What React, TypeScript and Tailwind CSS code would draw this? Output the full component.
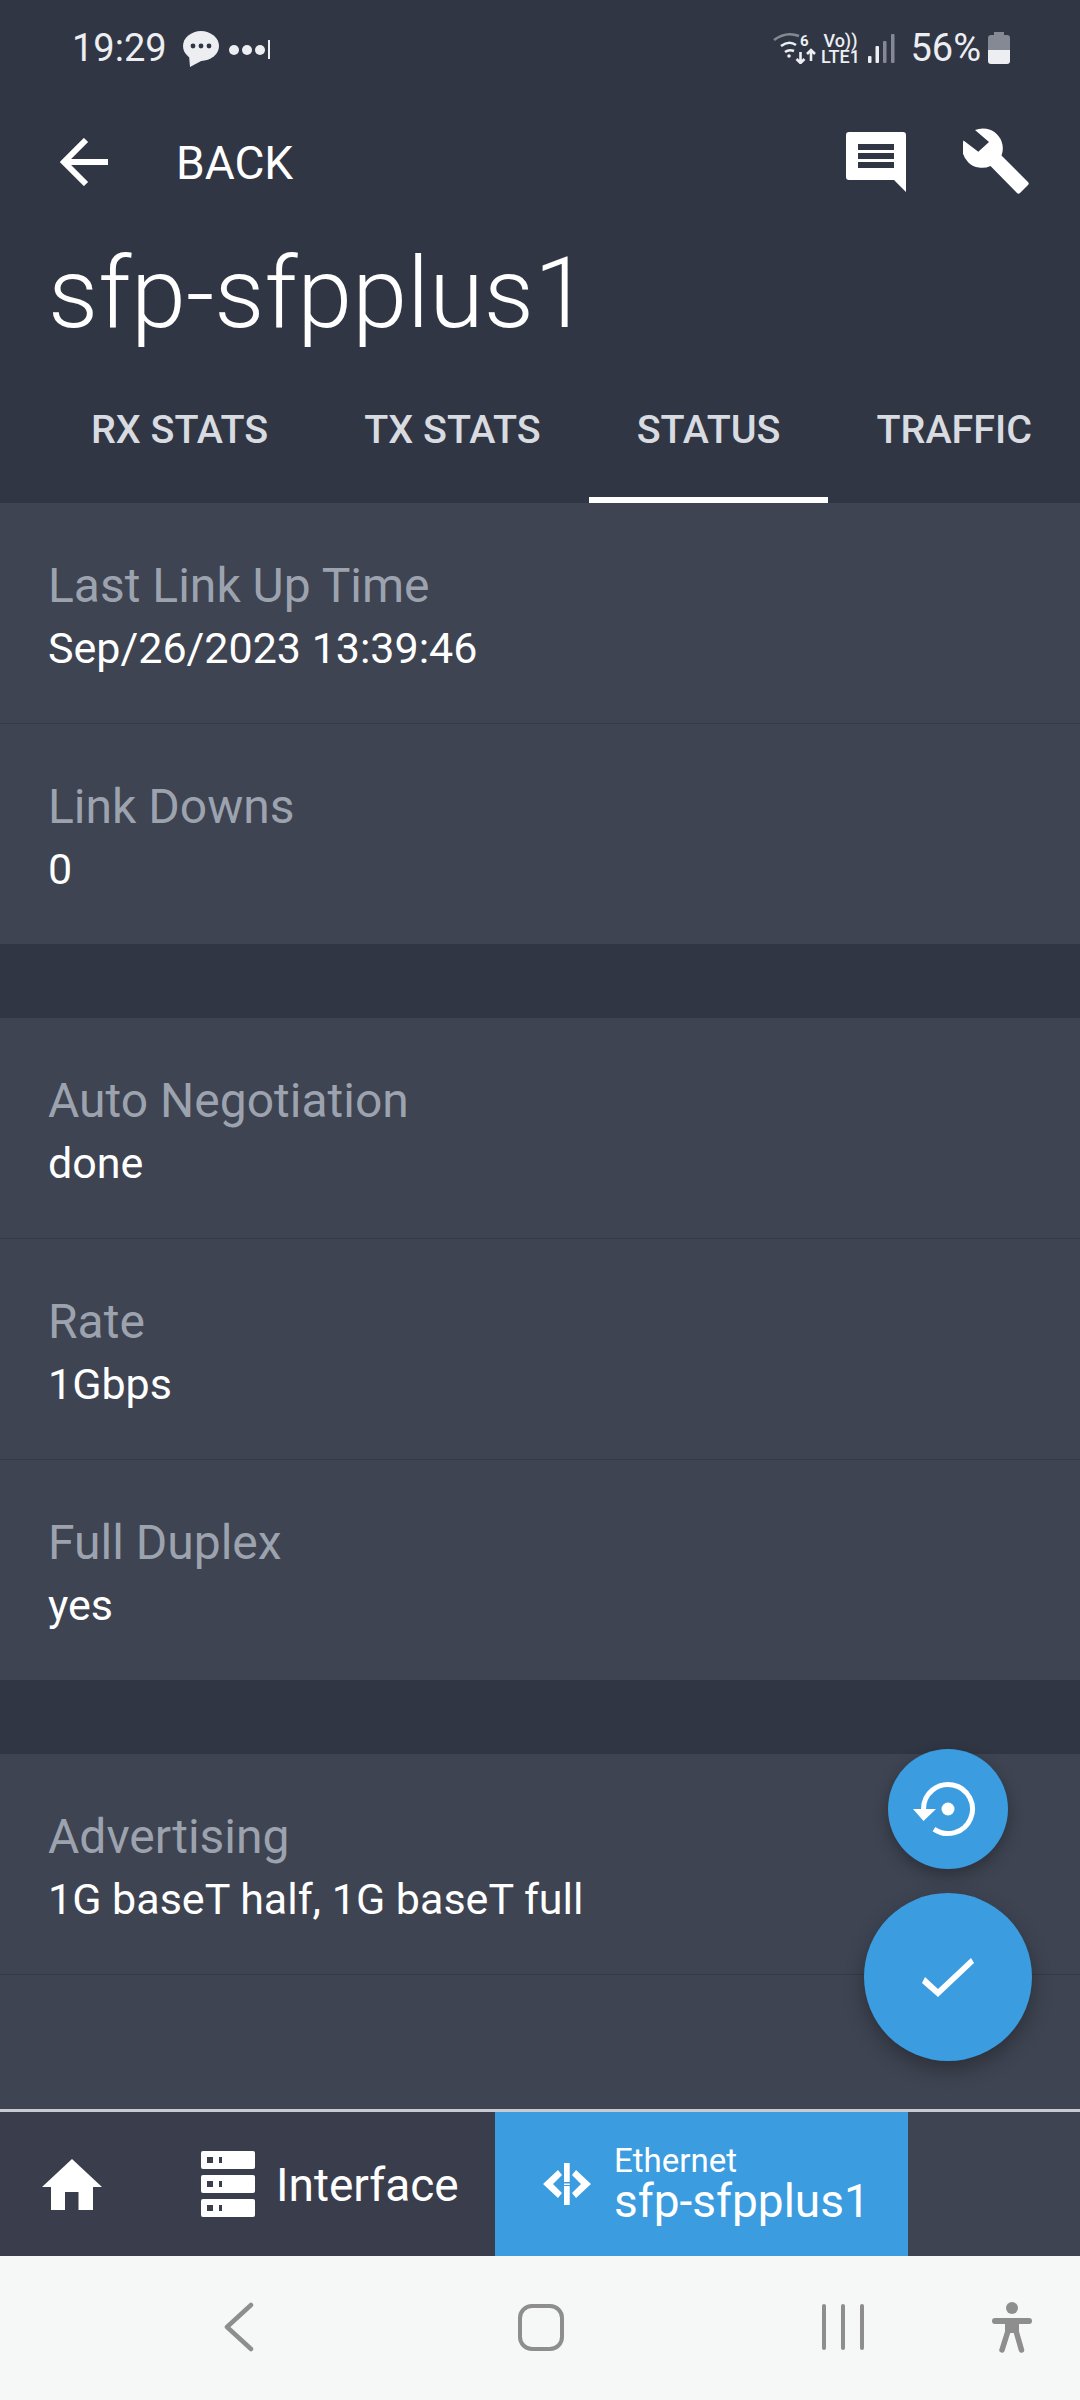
const font = { fontFamily: 'Roboto, sans-serif' };

type Row = { label: string; value: string };

const Field = ({ label, value, border }: Row & { border?: boolean }) => (
  <div className={`px-12 pt-[55px] ${border ? 'h-[221px] border-b border-[#343a48]' : 'h-[220px]'}`}>
    <div className="text-[48px] leading-[56px] text-[#9ca3ae]">{label}</div>
    <div className="mt-[9px] text-[43px] leading-[50px] text-white">{value}</div>
  </div>
);

const Tab = ({ label, active }: { label: string; active?: boolean }) => (
  <div className={`px-12 h-full shrink-0 whitespace-nowrap flex items-center text-[39.5px] font-medium text-[#d8dbe0] ${active ? 'shadow-[inset_0_-6px_0_#ffffff]' : ''}`}>
    {label}
  </div>
);

export default function App() {
  return (
    <div style={font} className="relative w-[1080px] h-[2400px] flex flex-col bg-[#3e4452] overflow-hidden">
      {/* Header */}
      <div className="bg-[#313644] h-[503px] flex flex-col shrink-0">
        <div className="h-[96px] flex items-center justify-between pl-[72px] pr-[70px] text-[#eceef1]">
          <div className="flex items-center">
            <span className="text-[38px] leading-[44px]">19:29</span>
            <svg width="38" height="36" viewBox="0 0 38 36" className="ml-[15px] mt-[2px]">
              <ellipse cx="19" cy="15" rx="18" ry="15" fill="#eceef1" />
              <path d="M7 24l1 12 13-7z" fill="#eceef1" />
              <circle cx="11" cy="15" r="2.400" fill="#313644" />
              <circle cx="19" cy="15" r="2.400" fill="#313644" />
              <circle cx="27" cy="15" r="2.400" fill="#313644" />
            </svg>
            <div className="ml-[9px] mt-[3px] flex items-center gap-[3px]">
              <span className="w-[10px] h-[10px] rounded-full bg-[#eceef1]" />
              <span className="w-[10px] h-[10px] rounded-full bg-[#eceef1]" />
              <span className="w-[10px] h-[10px] rounded-full bg-[#eceef1]" />
              <span className="w-[2px] h-[19px] bg-[#eceef1]" />
            </div>
          </div>
          <div className="flex items-center">
            <svg width="44" height="32" viewBox="0 0 44 32" fill="none" stroke="#eceef1" strokeWidth="2.600">
              <path d="M1 8q12-9 25-4" stroke="#858994" />
              <path d="M8 14q8-6 15-1" />
              <path d="M12 20q4-3 9-1" />
              <circle cx="16" cy="24" r="1.800" fill="#eceef1" stroke="none" />
              <text x="27" y="14" fontSize="15" fontWeight="700" fill="#eceef1" stroke="none">6</text>
              <path d="M27.500 20v11M23.500 27l4 4 4-4M38 29V18M34 22l4-4 4 4" />
            </svg>
            <div className="ml-[4px] w-[38px] flex flex-col items-center text-[#eceef1] font-medium">
              <span className="text-[18px] leading-[17px]">Vo))</span>
              <span className="text-[18px] leading-[16px] whitespace-nowrap">LTE1</span>
            </div>
            <svg width="27" height="29" viewBox="0 0 27 29" className="ml-[9px]">
              <rect x="0" y="22" width="3.500" height="7" rx="1" fill="#eceef1" />
              <rect x="7.500" y="12" width="3.500" height="17" rx="1" fill="#eceef1" />
              <rect x="15" y="7" width="3.500" height="22" rx="1" fill="#858994" />
              <rect x="23" y="0" width="3.500" height="29" rx="1" fill="#858994" />
            </svg>
            <span className="ml-[15px] text-[38px] leading-[44px]">56%</span>
            <svg width="22" height="32" viewBox="0 0 22 32" className="ml-[7px]">
              <path d="M6 0h10v3h3a3 3 0 0 1 3 3v12H0V6a3 3 0 0 1 3-3h3z" fill="#858994" />
              <path d="M0 18h22v11a3 3 0 0 1-3 3H3a3 3 0 0 1-3-3z" fill="#eceef1" />
            </svg>
          </div>
        </div>
        <div className="h-[80px] flex items-center mt-[26px] pl-[60px] pr-[49px]">
          <svg width="48" height="48" viewBox="0 0 48 48" fill="none" stroke="#fff" strokeWidth="6">
            <path d="M4 24h44M26 2L4 24l22 22" />
          </svg>
          <span className="ml-[68px] mt-[2px] text-[46px] text-white">BACK</span>
          <div className="ml-auto flex items-center">
            <svg width="60" height="60" viewBox="0 0 60 60">
              <path d="M3 0h54a3 3 0 0 1 3 3v57L48 48H3a3 3 0 0 1-3-3V3a3 3 0 0 1 3-3z" fill="#fff" />
              <path d="M12 12h36v6H12zM12 21h36v6H12zM12 30h36v6H12z" fill="#313644" />
            </svg>
            <svg width="68" height="68" viewBox="0 0 68 68" className="ml-[57px]">
              <path d="M12 2A20 20 0 0 1 38.500 27.500L65 54q1.500 1.500 0 3l-8 8q-1.500 1.500-3 0L27.500 38A20 20 0 0 1 .5 12.500L15.300 23.700 26 14z" fill="#fff" />
            </svg>
          </div>
        </div>
        <div className="mt-[40px] h-[102px] pl-[48px] text-[99px] leading-[102px] font-light text-white">sfp-sfpplus1</div>
        <div className="mt-auto h-[146px] flex pl-[43px]">
          <Tab label="RX STATS" />
          <Tab label="TX STATS" />
          <Tab label="STATUS" active />
          <Tab label="TRAFFIC" />
        </div>
      </div>

      {/* Status rows */}
      <div className="flex-1 flex flex-col">
        <Field label="Last Link Up Time" value="Sep/26/2023 13:39:46" border />
        <Field label="Link Downs" value="0" />
        <div className="h-[74px] bg-[#313644]" />
        <Field label="Auto Negotiation" value="done" border />
        <Field label="Rate" value="1Gbps" border />
        <Field label="Full Duplex" value="yes" />
        <div className="h-[74px] bg-[#313644]" />
        <Field label="Advertising" value="1G baseT half, 1G baseT full" border />
      </div>

      {/* Bottom breadcrumb */}
      <div className="h-[147px] shrink-0 flex border-t-[3px] border-[#c8ccd2] bg-[#3e4452]">
        <div className="w-[157px] flex items-center pl-[42px] bg-[#3a3e4c]">
          <svg width="60" height="51" viewBox="0 0 60 51" className="mt-[1px]">
            <path d="M30 0l30 28h-9v23H36.500V33H23v18H9V28H0z" fill="#fff" />
          </svg>
        </div>
        <div className="w-[338px] flex items-center bg-[#3a3e4c] pl-[44px]">
          <svg width="54" height="66" viewBox="0 0 54 66">
            {[0, 24, 48].map((y) => (
              <g key={y}>
                <rect x="0" y={y} width="54" height="18" rx="2" fill="#fff" />
                <rect x="6" y={y + 6} width="6" height="6" fill="#3a3e4c" />
                <rect x="18" y={y + 6} width="3" height="6" fill="#3a3e4c" />
              </g>
            ))}
          </svg>
          <span className="ml-[21px] mt-[3px] text-[46px] text-white">Interface</span>
        </div>
        <div className="w-[413px] flex items-center bg-[#3b9ce0] pl-[48px]">
          <svg width="48" height="42" viewBox="0 0 48 42">
            <path d="M0 21L15 7l4 5-9 9 9 9-4 5zM48 21L33 7l-4 5 9 9-9 9 4 5z" fill="#fff" />
            <path d="M21 0h5.700v19H21zM21 20.500h5.700V22H21zM21 23h5.700v19H21z" fill="#fff" />
          </svg>
          <div className="ml-[23px] flex flex-col text-white">
            <span className="text-[33px] leading-[34px]">Ethernet</span>
            <span className="text-[46px] leading-[47px]">sfp-sfpplus1</span>
          </div>
        </div>
      </div>

      {/* Android nav */}
      <div className="h-[144px] shrink-0 bg-[#f6f7f7] flex items-center">
        <svg width="30" height="50" viewBox="0 0 30 50" className="ml-[224px] -mt-[2px]" fill="none" stroke="#8e8e8e" strokeWidth="4.500" strokeLinecap="round" strokeLinejoin="round">
          <path d="M27 3L3 25l24 22" />
        </svg>
        <div className="ml-[264px] -mt-[2px] w-[46px] h-[47px] rounded-[14px] border-[4px] border-[#8e8e8e]" />
        <div className="ml-[258px] -mt-[2px] flex gap-[15px]">
          <span className="w-[4px] h-[46px] rounded-full bg-[#8e8e8e]" />
          <span className="w-[4px] h-[46px] rounded-full bg-[#8e8e8e]" />
          <span className="w-[4px] h-[46px] rounded-full bg-[#8e8e8e]" />
        </div>
        <svg width="40" height="52" viewBox="0 0 40 52" className="ml-[128px]">
          <circle cx="20" cy="6" r="6" fill="#8e8e8e" />
          <path d="M3 19h34" stroke="#8e8e8e" strokeWidth="6" strokeLinecap="round" />
          <path d="M13 18h14v13H13z" fill="#8e8e8e" />
          <path d="M16 29l-6 19M24 29l5.500 19" stroke="#8e8e8e" strokeWidth="5.500" strokeLinecap="round" />
        </svg>
      </div>

      {/* Floating buttons */}
      <div className="absolute left-[888px] top-[1749px] w-[120px] h-[120px] rounded-full bg-[#3b9ce0] shadow-[0_6px_16px_rgba(0,0,0,0.3)] flex items-center justify-center">
        <svg width="64" height="56" viewBox="0 0 64 56" fill="none" className="-ml-[6px]">
          <path d="M10.500 28A24.500 24.500 0 1 1 21 48.100" stroke="#fff" strokeWidth="5" />
          <path d="M0 28h23L10.500 40z" fill="#fff" />
          <circle cx="35" cy="28" r="6.500" fill="#fff" />
        </svg>
      </div>
      <div className="absolute left-[864px] top-[1893px] w-[168px] h-[168px] rounded-full bg-[#3b9ce0] shadow-[0_8px_20px_rgba(0,0,0,0.3)] flex items-center justify-center">
        <svg width="52" height="41" viewBox="0 0 52 41">
          <path d="M0 26l3-6 13 12L49 1l3 5-36 34z" fill="#fff" />
        </svg>
      </div>
    </div>
  );
}
